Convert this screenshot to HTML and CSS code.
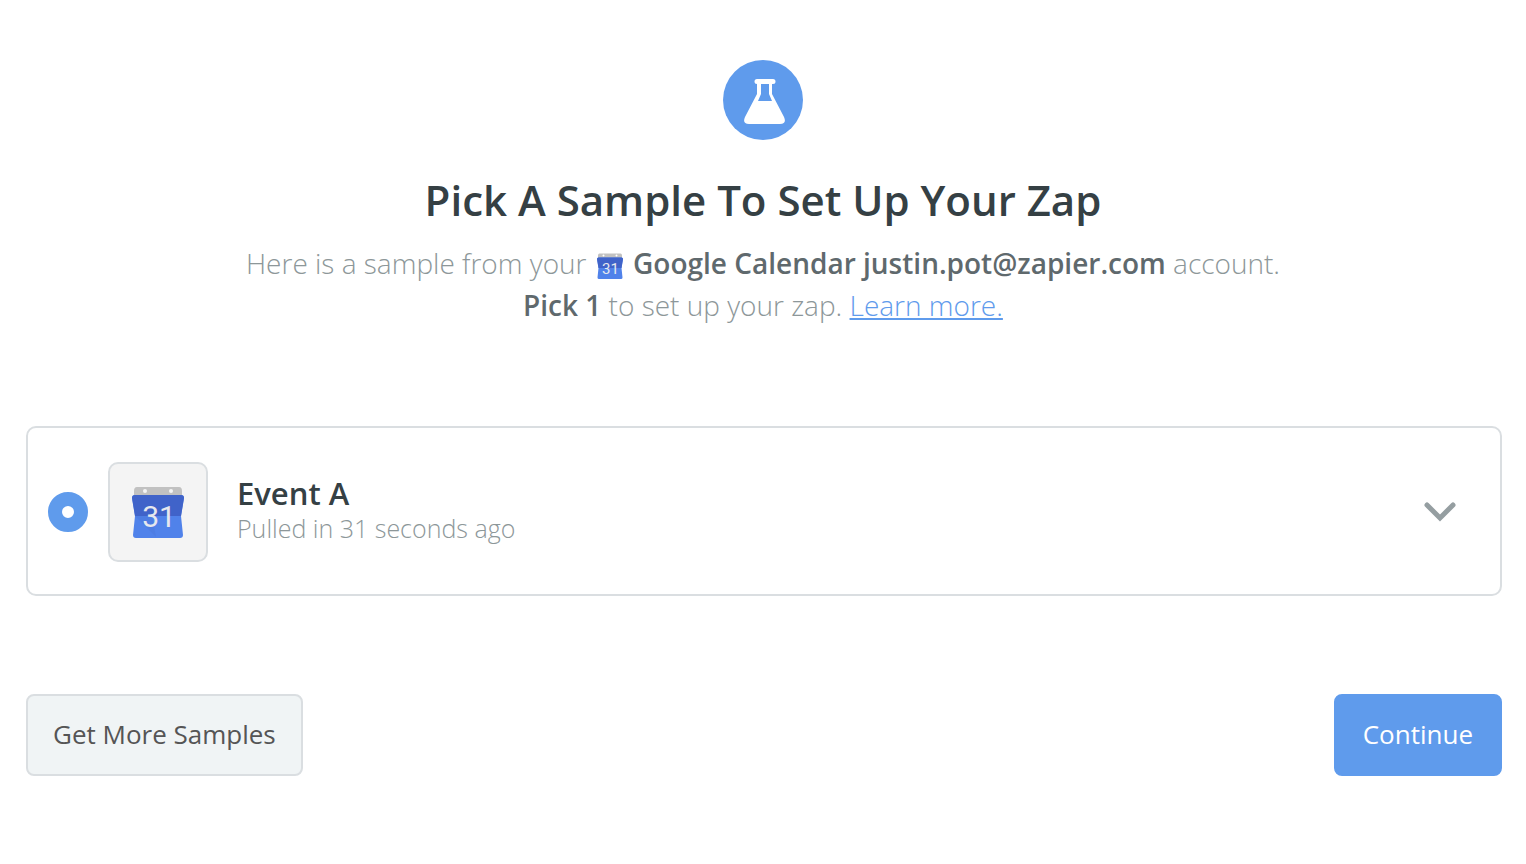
FILE: index.html
```
<!DOCTYPE html>
<html lang="en">
<head>
  <meta charset="UTF-8" />
  <meta name="viewport" content="width=device-width, initial-scale=1.0"/>
  <title>Pick A Sample To Set Up Your Zap</title>
  <link rel="stylesheet" href="styles.css">
</head>
<body>
  <header class="intro">
    <div class="badge">
      <svg viewBox="0 0 80 80" width="80" height="80" aria-hidden="true">
        <path d="M34 19h16a2 2 0 0 1 0 5h-1v10l12 23q3 7-4 7H26q-7 0-4-7l12-23v-10a2 2 0 0 1 0-5z" fill="#fff"/>
        <path d="M38 24h8v10l3 7H35l3-7z" fill="#5f9bec"/>
      </svg>
    </div>
    <h1>Pick A Sample To Set Up Your Zap</h1>
    <p>Here is a sample from your
      <svg class="inline-icon" viewBox="0 0 52 52" aria-hidden="true">
        <path d="M5 1h42q3 0 3 4v8H2V5q0-4 3-4z" fill="#c1c1c1"/>
        <circle cx="13" cy="5" r="2" fill="#fff"/>
        <circle cx="39" cy="5" r="2" fill="#fff"/>
        <path d="M3 9h46q3 0 3 3l-3 18 2 19q0 3-3 3H4q-3 0-3-3l2-19L0 12q0-3 3-3z" fill="#5082ea"/>
        <path d="M3 9h46q3 0 3 3l-3 18H3L0 12q0-3 3-3z" fill="#4063c9"/>
        <text x="27" y="41" text-anchor="middle" class="calendar-day">31</text>
      </svg>
      <b>Google Calendar justin.pot@zapier.com</b> account.<br>
      <b>Pick 1</b> to set up your zap. <a href="#">Learn more.</a></p>
  </header>

  <form>
    <div class="sample">
      <input type="radio" id="eventA" name="sample" checked>
      <label for="eventA">
        <span class="thumb">
          <svg width="52" height="52" viewBox="0 0 52 52" aria-hidden="true">
            <path d="M5 1h42q3 0 3 4v8H2V5q0-4 3-4z" fill="#c1c1c1"/>
            <circle cx="13" cy="5" r="2" fill="#f5f5f5"/>
            <circle cx="39" cy="5" r="2" fill="#f5f5f5"/>
            <path d="M3 9h46q3 0 3 3l-3 18 2 19q0 3-3 3H4q-3 0-3-3l2-19L0 12q0-3 3-3z" fill="#5082ea"/>
            <path d="M3 9h46q3 0 3 3l-3 18H3L0 12q0-3 3-3z" fill="#4063c9"/>
            <path d="M3 30h17l4 21z" fill="#4d7de3"/>
            <text x="27" y="41" text-anchor="middle" class="calendar-day">31</text>
          </svg>
        </span>
        <span class="details">
          <strong>Event A</strong>
          <small>Pulled in 31 seconds ago</small>
        </span>
      </label>
      <button type="button" class="expand" aria-label="Show details">
        <svg width="32" height="20" viewBox="0 0 32 20" aria-hidden="true">
          <path d="M3 3l13 13L29 3" fill="none" stroke="#959ea1" stroke-width="5" stroke-linecap="round"/>
        </svg>
      </button>
    </div>
    <div class="actions">
      <button type="button" class="btn">Get More Samples</button>
      <button type="submit" class="btn btn-primary">Continue</button>
    </div>
  </form>
</body>
</html>
```
FILE: styles.css
```
* {
  box-sizing: border-box;
}
body {
  margin: 0;
  padding: 60px 24px 60px 26px;
  font-family: "Open Sans", sans-serif;
  background-color: #fff;
  color: #354044;
}
.intro {
  padding-right: 2px;
  text-align: center;
}
.badge {
  width: 80px;
  height: 80px;
  margin: 0 auto;
  border-radius: 50%;
  background-color: #5f9bec;
}
h1 {
  margin: 31px 0 13px;
  font-size: 42px;
  font-weight: 600;
  line-height: 58px;
}
p {
  margin: 0;
  font-size: 28px;
  font-weight: 300;
  line-height: 42px;
  color: #8d9799;
}
p b {
  font-weight: 600;
  color: #5f696d;
}
p a {
  color: #5f9bec;
}
.inline-icon {
  width: 26px;
  height: 26px;
  margin: 0 3px;
  vertical-align: -5px;
}
.calendar-day {
  font-family: Roboto, sans-serif;
  font-size: 30px;
  font-weight: 400;
  fill: #e6e8ee;
}
.sample {
  display: flex;
  align-items: center;
  margin-top: 100px;
  padding: 34px 44px 32px 20px;
  border: 2px solid #dadee1;
  border-radius: 10px;
}
.sample input {
  appearance: none;
  width: 40px;
  height: 40px;
  margin: 0 20px 0 0;
  border: 14px solid #5f9bec;
  border-radius: 50%;
  background-color: #fff;
}
.sample label {
  display: flex;
  flex: 1;
  align-items: center;
  gap: 29px;
}
.thumb {
  display: flex;
  align-items: center;
  justify-content: center;
  width: 100px;
  height: 100px;
  border: 2px solid #dadee1;
  border-radius: 10px;
  background-color: #f4f4f4;
}
.details {
  padding-bottom: 4px;
}
.details strong,
.details small {
  display: block;
}
.details strong {
  font-size: 31px;
  font-weight: 600;
  line-height: 36px;
}
.details small {
  font-size: 25px;
  font-weight: 300;
  line-height: 34px;
  color: #8d9799;
}
.expand {
  padding: 0;
  border: 0;
  background: none;
}
.expand svg {
  display: block;
}
.actions {
  display: flex;
  justify-content: space-between;
  margin-top: 98px;
}
.btn {
  height: 82px;
  padding: 0 25px 2px;
  border: 2px solid #dadee1;
  border-radius: 8px;
  background-color: #f0f4f5;
  color: #555;
  font-family: inherit;
  font-size: 26px;
}
.btn-primary {
  padding: 0 27px 2px;
  border-color: #5f9bec;
  background-color: #5f9bec;
  color: #fff;
}
```
